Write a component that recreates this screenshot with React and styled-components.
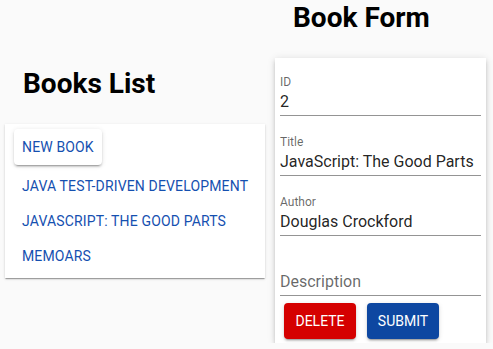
import React from 'react';
import styled, { createGlobalStyle } from 'styled-components';

const GlobalStyle = createGlobalStyle`
  body {
    margin: 0;
    background: #fafafa;
    font-family: Roboto, "Noto Sans", Arial, sans-serif;
  }
`

const books = [
  'Java Test-Driven Development',
  'JavaScript: The Good Parts',
  'Memoars'
];

const App = () => {
  return (
    <>
      <GlobalStyle />
      <Page>
        <Column width="260px">
          <Heading>Books List</Heading>
          <ListCard>
            <NewBookButton type="button">New Book</NewBookButton>
            {books.map((title, i) => (
              <BookLink key={i} href="#">{title}</BookLink>
            ))}
          </ListCard>
        </Column>
        <Column width="211px">
          <Heading>Book Form</Heading>
          <FormCard onSubmit={e => e.preventDefault()}>
            <Field>
              <Label>ID</Label>
              <Input defaultValue="2" />
            </Field>
            <Field>
              <Label>Title</Label>
              <Input defaultValue="JavaScript: The Good Parts" />
            </Field>
            <Field>
              <Label>Author</Label>
              <Input defaultValue="Douglas Crockford" />
            </Field>
            <Field>
              <Label />
              <Input placeholder="Description" />
            </Field>
            <Buttons>
              <ActionButton type="button" color="#d50000">Delete</ActionButton>
              <ActionButton type="submit" color="#0d47a1">Submit</ActionButton>
            </Buttons>
          </FormCard>
        </Column>
      </Page>
    </>
  )
}

export default App

const Page = styled.div`
  display: flex;
  align-items: center;
  gap: 10px;
  padding: 3px 0 0 5px;
`
const Column = styled.div`
  display: flex;
  flex-direction: column;
  width: ${p => p.width};
`
const Heading = styled.h1`
  margin: 0 0 25px 18px;
  font-size: 28px;
  font-weight: 700;
  line-height: 30px;
  color: #000;
`
const ListCard = styled.div`
  display: flex;
  flex-direction: column;
  align-items: flex-start;
  background: #fff;
  padding: 5px 0 4px;
  box-shadow: 0 2px 1px -1px rgba(0,0,0,0.2), 0 1px 1px 0 rgba(0,0,0,0.14), 0 1px 3px 0 rgba(0,0,0,0.12);
`
const NewBookButton = styled.button`
  margin: 0 0 4px 9px;
  height: 36px;
  padding: 0 8px;
  border: none;
  border-radius: 4px;
  background: #fff;
  color: #1550b0;
  font-family: inherit;
  font-size: 14px;
  letter-spacing: 0.15px;
  text-transform: uppercase;
  box-shadow: 0 3px 1px -2px rgba(0,0,0,0.2), 0 2px 2px 0 rgba(0,0,0,0.14), 0 1px 5px 0 rgba(0,0,0,0.12);
`
const BookLink = styled.a`
  display: block;
  margin-left: 9px;
  padding: 0 8px;
  line-height: 35px;
  color: #1550b0;
  font-size: 14px;
  letter-spacing: 0.15px;
  text-decoration: none;
  text-transform: uppercase;
`
const FormCard = styled.form`
  display: flex;
  flex-direction: column;
  gap: 19px;
  background: #fff;
  padding: 17px 5px 4px;
  box-shadow: 0 3px 3px -2px rgba(0,0,0,0.2), 0 3px 4px 0 rgba(0,0,0,0.14), 0 1px 8px 0 rgba(0,0,0,0.12);
`
const Field = styled.label`
  display: flex;
  flex-direction: column;
  border-bottom: 1px solid rgba(0,0,0,0.42);
  padding-bottom: 3px;
`
const Label = styled.span`
  height: 14px;
  font-size: 12px;
  line-height: 14px;
  color: rgba(0,0,0,0.6);
`
const Input = styled.input`
  margin-top: 3px;
  height: 20px;
  padding: 0;
  border: none;
  outline: none;
  background: transparent;
  font-family: inherit;
  font-size: 16px;
  line-height: 20px;
  color: rgba(0,0,0,0.87);
  &::placeholder {
    color: rgba(0,0,0,0.6);
  }
`
const Buttons = styled.div`
  display: flex;
  gap: 11px;
  margin: -12px 0 0 4px;
`
const ActionButton = styled.button`
  width: 72px;
  height: 36px;
  border: none;
  border-radius: 4px;
  background: ${p => p.color};
  color: #fff;
  font-family: inherit;
  font-size: 14px;
  text-transform: uppercase;
  box-shadow: 0 3px 1px -2px rgba(0,0,0,0.2), 0 2px 2px 0 rgba(0,0,0,0.14), 0 1px 5px 0 rgba(0,0,0,0.12);
`
